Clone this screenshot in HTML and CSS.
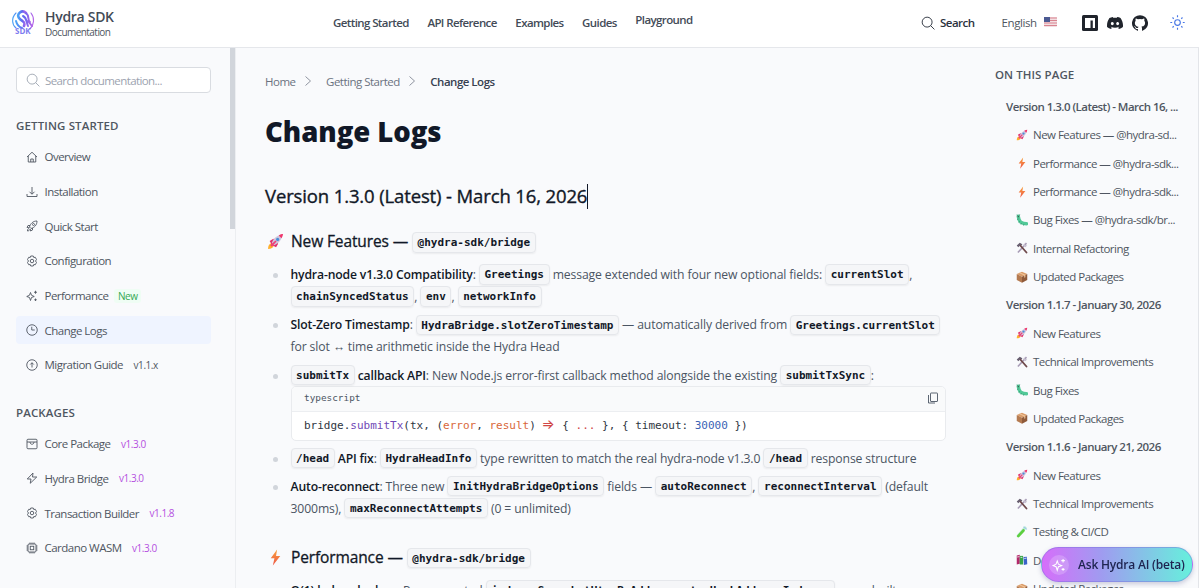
FILE: index.html
```
<!DOCTYPE html>
<html lang="en">
<head>
    <meta charset="UTF-8">
    <title>Change Logs - Hydra SDK</title>
    <link rel="stylesheet" href="styles.css">
</head>
<body>
    <!-- icon sprite -->
    <svg class="sprite">
        <linearGradient id="logoGrad" x1="0" y1="0" x2="1" y2="0"><stop offset="0" stop-color="#4aa3f5"/><stop offset=".5" stop-color="#6366f1"/><stop offset="1" stop-color="#b565e8"/></linearGradient>
        <symbol id="i-search" viewBox="0 0 24 24"><circle cx="10.5" cy="10.5" r="8.5"/><path d="M16.5 16.5 23 23"/></symbol>
        <symbol id="i-chev" viewBox="0 0 24 24"><path d="M7 3l10 9-10 9"/></symbol>
        <symbol id="i-home" viewBox="0 0 24 24"><path d="M2 12 12 2.500l10 9.500M4.500 10v12h15V10M9.500 22v-6h5v6"/></symbol>
        <symbol id="i-down" viewBox="0 0 24 24"><path d="M12 2v14M7 11.500l5 5 5-5M2 16v5h20v-5"/></symbol>
        <symbol id="i-rocket" viewBox="0 0 24 24"><path d="M7 14C9 7 14 2 22 2c0 8-5 13-12 15zM8 11H4l-2 4 5 .5M13 16v4l-4 2-.5-4M3 22c0-3 1-5 3-5M3 22c2 0 4-1 4-3"/><circle cx="15" cy="9" r="2"/></symbol>
        <symbol id="i-gear" viewBox="0 0 24 24"><path d="M9.500 2h5l1 3 3-.5 2.500 4.500-2 3 2 3-2.500 4.500-3-.5-1 3h-5l-1-3-3 .5L3 15l2-3-2-3 2.500-4.500 3 .5z"/><circle cx="12" cy="12" r="3.500"/></symbol>
        <symbol id="i-spark" viewBox="0 0 24 24"><path d="M9 5l2 5.500L16.500 13 11 15l-2 6-2-6-5.500-2L7 10.500zM19 1.500v6M16 4.500h6M19 17v5M16.500 19.500h5"/></symbol>
        <symbol id="i-clock" viewBox="0 0 24 24"><circle cx="12" cy="12" r="10.500"/><path d="M11.500 5.500V12h6"/></symbol>
        <symbol id="i-up" viewBox="0 0 24 24"><circle cx="12" cy="12" r="10.500"/><path d="M12 17V7.500M8.500 11 12 7.500l3.500 3.500"/></symbol>
        <symbol id="i-box" viewBox="0 0 24 24"><rect x="2" y="2.500" width="20" height="19" rx="2"/><path d="M2 8h20M8 8c0 6 8 6 8 0"/></symbol>
        <symbol id="i-bolt" viewBox="0 0 24 24"><path d="M14 2 2.500 14H10l-1.500 8.500L21.500 10H13z"/></symbol>
        <symbol id="i-chip" viewBox="0 0 24 24"><rect x="4" y="4" width="16" height="16" rx="2"/><rect x="8.500" y="8.500" width="7" height="7"/><path d="M8 1v3M12 1v3M16 1v3M8 20v3M12 20v3M16 20v3M1 8h3M1 12h3M1 16h3M20 8h3M20 12h3M20 16h3"/></symbol>
        <symbol id="i-copy" viewBox="0 0 24 24"><rect x="7" y="2" width="14" height="17" rx="1"/><path d="M3 6v16h13"/></symbol>
        <symbol id="i-sun" viewBox="0 0 24 24"><circle cx="12" cy="12" r="4.500"/><path d="M12 .5v3M12 20.500v3M.5 12h3M20.500 12h3M4 4l2 2M18 18l2 2M4 20l2-2M18 6l2-2"/></symbol>
        <symbol id="e-rocket" viewBox="0 0 32 32"><path d="M2 30c0-6 2-10 7-11l4 4c-1 5-5 7-11 7z" fill="#ffb02e"/><path d="M5 15l7-4 4 3-7 8zM17 27l4-7-3-4-8 7z" fill="#e0316e"/><path d="M9 19C12 10 19 4 29 3c-1 10-7 17-16 20z" fill="#cfc6dc"/><path d="M22 4.500C25 3 28 2 30 2c0 2-1 5-2.500 8z" fill="#f0356b"/><circle cx="20" cy="12" r="3" fill="#4a90d9"/><path d="M6 23l10-9 2 2-9 10z" fill="#ef3f78"/></symbol>
        <linearGradient id="boltGrad" x1="0" y1="0" x2="0" y2="1"><stop offset="0" stop-color="#f9a33b"/><stop offset="1" stop-color="#ed5548"/></linearGradient>
        <symbol id="e-bolt" viewBox="0 0 32 32"><path d="M19 1 7 17.500h7L11 31l14-18h-8z" fill="url(#boltGrad)"/></symbol>
        <symbol id="e-bug" viewBox="0 0 32 32"><path d="M6 6c1 7 2 12 7 16 5 3 9 4 15 4" fill="none" stroke="#52c998" stroke-width="9" stroke-linecap="round"/><path d="M3 15l4-2M7 22l4-3M13 28l2-4M20 31l1-4M2 2l4 3M10 1 8 5" stroke="#3c9474" stroke-width="2"/><circle cx="6" cy="7" r="1.500" fill="#333"/></symbol>
        <symbol id="e-tools" viewBox="0 0 32 32"><path d="M28 3 5 28" stroke="#a79bb5" stroke-width="4"/><path d="M2 9 10 2l7 4-3 4-3-1-5 5z" fill="#675e70"/><path d="M12 10l16 18" stroke="#6f4a4c" stroke-width="5" stroke-linecap="round"/><path d="M22 3l3 5 5 1-5 5-6-5z" fill="#c7bfd0"/></symbol>
        <symbol id="e-box" viewBox="0 0 32 32"><path d="M16 2 30 8 16 15 2 8z" fill="#d99b68"/><path d="M2 8v16l14 7V15z" fill="#b47a50"/><path d="M30 8v16l-14 7V15z" fill="#8f5a3a"/><path d="M8 5l14 7v6l3-1.500V10L11 4z" fill="#f1c69a"/></symbol>
        <symbol id="e-tube" viewBox="0 0 32 32"><path d="M24 5 6 26" stroke="#bfe8d8" stroke-width="8" stroke-linecap="round"/><path d="M20 12 6 27" stroke="#5dcf3e" stroke-width="7" stroke-linecap="round"/><path d="M20 2l9 7" stroke="#9bcfe0" stroke-width="3"/></symbol>
        <symbol id="e-books" viewBox="0 0 32 32"><path d="M2 4l8-2v24l-8 2z" fill="#b3286b"/><path d="M10 5h9v23h-9z" fill="#38a34a"/><path d="M20 8l9-1 1 20-9 2z" fill="#3a62c8"/><path d="M12 9h5M3 8l6-1M22 12l6-1" stroke="#fff" stroke-width="2"/></symbol>
    </svg>

    <header class="header">
        <div class="brand">
            <svg class="logo" viewBox="0 0 24 26">
                <g fill="none" stroke="url(#logoGrad)" stroke-linecap="round">
                    <path d="M5 4C0 9 1 16 5 19M20 4c4 5 3 12-1 16" stroke-width="1.100"/>
                    <path d="M15 4c-4-4-10 1-7 5s7 3 5 8" stroke-width="2.600"/>
                    <path d="M15 4c4 3 1 7 4 9M12 7c4 2 3 5 5 10M5 12c1 4 3 6 6 7M17 12l4 5" stroke-width="2"/>
                </g>
                <text x="4" y="24.500" class="logo-text">SDK</text>
            </svg>
            <div>
                <div class="brand-name">Hydra SDK</div>
                <div class="brand-sub">Documentation</div>
            </div>
        </div>
        <nav class="nav">
            <a>Getting Started</a>
            <a>API Reference</a>
            <a>Examples</a>
            <a>Guides</a>
            <a class="raised">Playground</a>
        </nav>
        <div class="tools">
            <div class="tool-search"><svg class="icon"><use href="#i-search"/></svg>Search</div>
            <div class="lang">English
                <svg class="flag" viewBox="0 0 13 10"><rect width="13" height="10" rx="1" fill="#f2dfe2"/><path d="M0 1h13M0 3.500h13M0 6h13M0 8.500h13" stroke="#d98490" stroke-width="1.200"/><rect width="6" height="5" fill="#4c5a92"/></svg>
            </div>
            <div class="social">
                <svg viewBox="0 0 16 16"><rect width="16" height="16" rx="1.500" fill="#20242c"/><path d="M3 3h10v10h-2.200V5.500H8.500V13H3z" fill="#fff"/></svg>
                <svg viewBox="0 0 24 24" fill="#20242c"><path d="M20.300 4.400A19.800 19.800 0 0 0 15.400 3l-.6 1.300a18 18 0 0 0-5.500 0L8.600 3a19.700 19.700 0 0 0-4.900 1.500C.5 9-.3 13.600.1 18.100a20 20 0 0 0 6 3l1.300-2-1.900-1 .4-.3a14 14 0 0 0 12.200 0l.4.3-1.900.9 1.300 2a20 20 0 0 0 6-3c.5-5.200-.8-9.700-3.600-13.600zM8 15.300c-1.200 0-2.200-1-2.200-2.400S6.800 10.500 8 10.500s2.200 1.100 2.200 2.400-1 2.400-2.200 2.400zm8 0c-1.200 0-2.200-1-2.200-2.400s1-2.400 2.200-2.400 2.200 1.100 2.200 2.400-1 2.400-2.200 2.400z"/></svg>
                <svg viewBox="0 0 24 24" fill="#20242c"><path d="M12 .3a12 12 0 0 0-3.800 23.400c.6.100.8-.3.800-.6v-2c-3.300.7-4-1.600-4-1.600-.6-1.400-1.400-1.800-1.400-1.800-1-.7.1-.7.1-.7 1.200 0 1.900 1.200 1.900 1.200 1 1.800 2.800 1.300 3.500 1 0-.8.400-1.300.7-1.600-2.700-.3-5.500-1.300-5.500-6 0-1.200.5-2.300 1.300-3.100-.2-.4-.6-1.600 0-3.200 0 0 1-.3 3.400 1.200a11.500 11.500 0 0 1 6 0c2.300-1.500 3.300-1.200 3.300-1.200.6 1.600.2 2.800 0 3.200.9.800 1.300 1.900 1.300 3.200 0 4.600-2.800 5.600-5.500 5.900.5.400.9 1 .9 2.200v3.300c0 .3.100.7.800.6A12 12 0 0 0 12 .3"/></svg>
            </div>
            <svg class="icon sun"><use href="#i-sun"/></svg>
        </div>
    </header>

    <div class="layout">
        <aside class="sidebar">
            <div class="side-search"><svg class="icon"><use href="#i-search"/></svg>Search documentation...</div>
            <h4 class="first">GETTING STARTED</h4>
            <ul>
                <li><svg class="icon"><use href="#i-home"/></svg>Overview</li>
                <li><svg class="icon"><use href="#i-down"/></svg>Installation</li>
                <li><svg class="icon"><use href="#i-rocket"/></svg>Quick Start</li>
                <li><svg class="icon"><use href="#i-gear"/></svg>Configuration</li>
                <li><svg class="icon"><use href="#i-spark"/></svg>Performance<span class="tag new">New</span></li>
                <li class="active"><svg class="icon"><use href="#i-clock"/></svg>Change Logs</li>
                <li><svg class="icon"><use href="#i-up"/></svg>Migration Guide<span class="tag">v1.1.x</span></li>
            </ul>
            <h4>PACKAGES</h4>
            <ul>
                <li><svg class="icon"><use href="#i-box"/></svg>Core Package<span class="tag ver">v1.3.0</span></li>
                <li><svg class="icon"><use href="#i-bolt"/></svg>Hydra Bridge<span class="tag ver">v1.3.0</span></li>
                <li><svg class="icon"><use href="#i-gear"/></svg>Transaction Builder<span class="tag ver">v1.1.8</span></li>
                <li><svg class="icon"><use href="#i-chip"/></svg>Cardano WASM<span class="tag ver">v1.3.0</span></li>
            </ul>
            <div class="scrollbar"></div>
        </aside>

        <main class="content">
            <div class="crumbs">
                <span>Home</span><svg class="icon"><use href="#i-chev"/></svg>
                <span>Getting Started</span><svg class="icon"><use href="#i-chev"/></svg>
                <span class="current">Change Logs</span>
            </div>
            <h1>Change Logs</h1>
            <h2>Version 1.3.0 (Latest) - March 16, 2026<i class="caret"></i></h2>

            <h3><svg class="emoji"><use href="#e-rocket"/></svg>New Features — <code>@hydra-sdk/bridge</code></h3>
            <ul class="log">
                <li><b>hydra-node v1.3.0 Compatibility</b>: <code>Greetings</code> message extended with four new optional fields: <code>currentSlot</code>,<br><code>chainSyncedStatus</code>, <code>env</code>, <code>networkInfo</code></li>
                <li><b>Slot-Zero Timestamp</b>: <code>HydraBridge.slotZeroTimestamp</code> — automatically derived from <code>Greetings.currentSlot</code><br>for slot ↔ time arithmetic inside the Hydra Head</li>
                <li><b><code>submitTx</code> callback API</b>: New Node.js error-first callback method alongside the existing <code>submitTxSync</code>:
                    <div class="codeblock">
                        <div class="code-head">typescript<svg class="icon"><use href="#i-copy"/></svg></div>
                        <pre>bridge.<span class="fn">submitTx</span>(tx, (<span class="arg">error</span>, <span class="arg">result</span>) <span class="arrow">=&gt;</span> { <span class="kw">...</span> }, { timeout: <span class="num">30000</span> })</pre>
                    </div>
                </li>
                <li><b><code>/head</code> API fix</b>: <code>HydraHeadInfo</code> type rewritten to match the real hydra-node v1.3.0 <code>/head</code> response structure</li>
                <li><b>Auto-reconnect</b>: Three new <code>InitHydraBridgeOptions</code> fields — <code>autoReconnect</code>, <code>reconnectInterval</code> (default<br>3000ms), <code>maxReconnectAttempts</code> (0 = unlimited)</li>
            </ul>

            <h3 class="perf"><svg class="emoji"><use href="#e-bolt"/></svg>Performance — <code>@hydra-sdk/bridge</code></h3>
            <ul class="log">
                <li><b>O(1) helper lookup</b>: Pre-computed <code>indexerSnapshotUtxoByAddress.utxoHashAddressIndexes</code> — prebuilt</li>
            </ul>
        </main>

        <aside class="toc">
            <h4>ON THIS PAGE</h4>
            <ul>
                <li class="top">Version 1.3.0 (Latest) - March 16, ...</li>
                <li><svg class="emoji"><use href="#e-rocket"/></svg>New Features — @hydra-sd...</li>
                <li><svg class="emoji"><use href="#e-bolt"/></svg>Performance — @hydra-sdk...</li>
                <li><svg class="emoji"><use href="#e-bolt"/></svg>Performance — @hydra-sdk...</li>
                <li><svg class="emoji"><use href="#e-bug"/></svg>Bug Fixes — @hydra-sdk/br...</li>
                <li><svg class="emoji"><use href="#e-tools"/></svg>Internal Refactoring</li>
                <li><svg class="emoji"><use href="#e-box"/></svg>Updated Packages</li>
                <li class="top">Version 1.1.7 - January 30, 2026</li>
                <li><svg class="emoji"><use href="#e-rocket"/></svg>New Features</li>
                <li><svg class="emoji"><use href="#e-tools"/></svg>Technical Improvements</li>
                <li><svg class="emoji"><use href="#e-bug"/></svg>Bug Fixes</li>
                <li><svg class="emoji"><use href="#e-box"/></svg>Updated Packages</li>
                <li class="top">Version 1.1.6 - January 21, 2026</li>
                <li><svg class="emoji"><use href="#e-rocket"/></svg>New Features</li>
                <li><svg class="emoji"><use href="#e-tools"/></svg>Technical Improvements</li>
                <li><svg class="emoji"><use href="#e-tube"/></svg>Testing &amp; CI/CD</li>
                <li><svg class="emoji"><use href="#e-books"/></svg>Documentation</li>
                <li><svg class="emoji"><use href="#e-box"/></svg>Updated Packages</li>
            </ul>
        </aside>
    </div>

    <button class="ask"><span class="ask-icon"><svg class="icon"><use href="#i-spark"/></svg></span>Ask Hydra AI (beta)</button>
</body>
</html>
```

FILE: styles.css
```
* {
    box-sizing: border-box;
}
body {
    margin: 0;
    height: 588px;
    overflow: hidden;
    font-family: "Open Sans", "Noto Sans", sans-serif;
    font-size: 11.5px;
    letter-spacing: -0.52px;
    color: #4f5661;
    background: #f9fafc;
}
ul {
    list-style: none;
    margin: 0;
    padding: 0;
}
h1, h2, h3, h4 {
    margin: 0;
}
.sprite {
    position: absolute;
    width: 0;
    height: 0;
}
.icon {
    width: 12px;
    height: 12px;
    flex: none;
    fill: none;
    stroke: currentColor;
    stroke-width: 1.8;
}
.emoji {
    width: 12px;
    height: 12px;
    flex: none;
}

/* header */
.header {
    display: flex;
    height: 48px;
    background: #fff;
    border-bottom: 1px solid #e5e7eb;
}
.brand {
    display: flex;
    width: 333px;
    padding: 8px 0 0 11px;
    gap: 10px;
}
.logo {
    width: 24px;
    height: 26px;
    margin-top: 1px;
}
.logo-text {
    font-size: 8px;
    font-weight: 700;
    letter-spacing: 0;
    fill: #7d7cf0;
}
.brand-name {
    font-size: 14px;
    line-height: 18px;
    font-weight: 600;
    letter-spacing: -0.3px;
    color: #434b57;
}
.brand-sub {
    font-size: 10px;
    line-height: 13px;
    letter-spacing: -0.55px;
}
.nav {
    display: flex;
    gap: 18.6px;
    width: 588px;
    line-height: 46px;
    font-weight: 600;
    letter-spacing: -0.6px;
    color: #434b57;
}
.raised {
    line-height: 39px;
}
.tools {
    display: flex;
    align-items: center;
    height: 45px;
}
.tool-search {
    display: flex;
    align-items: center;
    gap: 5px;
    width: 80.5px;
    font-weight: 600;
    letter-spacing: -0.5px;
    color: #2b323d;
}
.tool-search .icon {
    width: 14px;
    height: 14px;
    stroke-width: 1.6;
}
.lang {
    display: flex;
    align-items: center;
    gap: 7px;
    width: 80px;
    letter-spacing: -0.4px;
}
.flag {
    width: 13px;
    height: 10px;
    margin-top: -1px;
}
.social {
    display: flex;
    gap: 9px;
    width: 88.5px;
}
.social svg {
    width: 16px;
    height: 16px;
}
.sun {
    width: 15px;
    height: 15px;
    color: #4776e6;
}

.layout {
    display: flex;
    height: 540px;
}

/* left menu */
.sidebar {
    position: relative;
    width: 236px;
    padding: 19px 24px 0 16px;
    border-right: 1px solid #eceef1;
}
.side-search {
    display: flex;
    align-items: center;
    gap: 5px;
    height: 26px;
    padding-left: 9px;
    background: #fff;
    border: 1px solid #d9dce1;
    border-radius: 4px;
    color: #9ca3af;
    letter-spacing: -0.6px;
}
.side-search .icon {
    width: 14px;
    height: 14px;
    stroke-width: 1.5;
}
.sidebar h4 {
    margin: 26px 0 9px;
    font-size: 11.5px;
    line-height: 16px;
    font-weight: 600;
    letter-spacing: 0.13px;
}
.sidebar h4.first {
    margin-top: 25px;
}
.sidebar li {
    display: flex;
    align-items: center;
    gap: 6.5px;
    height: 27.7px;
    margin-bottom: 7px;
    padding-left: 10px;
    border-radius: 4px;
}
.sidebar .active {
    background: #eff4ff;
}
.tag {
    margin-left: 4px;
    font-size: 10px;
    letter-spacing: -0.45px;
}
.tag.new {
    margin-left: -1px;
    padding: 0 4px;
    border-radius: 3px;
    background: #effdf4;
    color: #34a853;
}
.tag.ver {
    color: #b44fe0;
}
.scrollbar {
    position: absolute;
    top: 0;
    right: 0;
    width: 5px;
    height: 181px;
    background: #d1d5db;
}

/* article */
.content {
    width: 759px;
    padding: 24px 0 0 29px;
    color: #4b5563;
}
.crumbs {
    display: flex;
    align-items: center;
    height: 20px;
    margin-top: -1px;
    letter-spacing: -0.5px;
    color: #6b7280;
}
.crumbs .icon {
    margin: 0 12.5px 0 6px;
    stroke-width: 1.5;
}
.crumbs .current {
    font-weight: 600;
    color: #374151;
}
h1 {
    margin-top: 21px;
    font-size: 27.5px;
    line-height: 40px;
    font-weight: 800;
    letter-spacing: -0.05px;
    color: #111827;
}
h2 {
    display: flex;
    align-items: center;
    margin-top: 31px;
    margin-bottom: 21px;
    font-size: 18.5px;
    line-height: 26px;
    font-weight: 400;
    letter-spacing: -0.13px;
    color: #111827;
    -webkit-text-stroke: 0.35px #111827;
}
.caret {
    width: 1px;
    height: 25px;
    background: #111827;
}
h3 {
    height: 22px;
    margin: 20px 0 12px;
    font-size: 15.5px;
    line-height: 22px;
    font-weight: 400;
    letter-spacing: -0.12px;
    color: #111827;
    -webkit-text-stroke: 0.3px #111827;
}
h3 .emoji {
    width: 17px;
    height: 17px;
    margin: 0 7px 0 2px;
    vertical-align: -3px;
}
.perf {
    margin-top: 26px;
}
.log li {
    position: relative;
    margin-bottom: 6.3px;
    padding-left: 25.5px;
    font-size: 12.2px;
    line-height: 22px;
    letter-spacing: -0.12px;
    white-space: nowrap;
}
.log li::before {
    content: "";
    position: absolute;
    left: 8px;
    top: 9px;
    width: 5px;
    height: 5px;
    border-radius: 50%;
    background: #d1d5db;
}
.log b {
    font-weight: 600;
    letter-spacing: -0.16px;
    color: #111827;
}
code {
    position: relative;
    top: -1px;
    padding: 2.6px 4.6px;
    border: 1px solid #e5e7eb;
    border-radius: 4px;
    background: #f5f6f8;
    box-shadow: 0 1px 2px rgba(0, 0, 0, 0.06);
    font-family: "DejaVu Sans Mono", monospace;
    font-size: 11px;
    line-height: 18px;
    font-weight: 700;
    letter-spacing: 0;
    color: #111827;
    -webkit-text-stroke: 0;
}
.codeblock {
    width: 655px;
    height: 55px;
    margin: -1px 0 7px;
    border: 1px solid #e9ebee;
    border-radius: 5px;
    background: #fff;
    overflow: hidden;
    font-family: "DejaVu Sans Mono", monospace;
    letter-spacing: 0;
}
.code-head {
    display: flex;
    justify-content: space-between;
    align-items: center;
    height: 25px;
    padding: 0 6px 1px 12.5px;
    border-bottom: 1px solid #eceef1;
    background: #f9fafb;
    font-size: 9.4px;
}
pre {
    margin: 0;
    padding: 3px 12.5px;
    font: inherit;
    font-size: 11px;
    color: #2f363f;
}
.fn { color: #7048b6; }
.arg { color: #d9673a; }
.kw { color: #d04848; }
.num { color: #3a62b5; }
.arrow {
    display: inline-block;
    width: 13.2px;
    font-family: Inter, sans-serif;
    font-size: 14px;
    line-height: 14px;
    text-indent: -1px;
    color: #d04848;
}

/* right outline */
.toc {
    width: 204px;
    padding: 19px 0 0;
    border-right: 1px solid #e3e5e9;
    white-space: nowrap;
}
.toc h4 {
    margin-bottom: 9.3px;
    font-size: 11.5px;
    line-height: 16px;
    font-weight: 600;
    letter-spacing: 0.07px;
}
.toc li {
    display: flex;
    align-items: center;
    gap: 5px;
    height: 28.37px;
    padding-left: 21px;
}
.toc .top {
    padding-left: 11px;
    font-weight: 600;
    letter-spacing: -0.53px;
}

.ask {
    position: fixed;
    right: 6px;
    bottom: 6px;
    display: flex;
    align-items: center;
    gap: 9px;
    width: 152px;
    height: 35px;
    padding: 0 0 0 7px;
    border: 1px solid rgba(120, 110, 220, 0.45);
    border-radius: 18px;
    background: linear-gradient(90deg, #d66efa, #9f9cf0 40%, #66f0dc);
    box-shadow: 0 2px 5px rgba(60, 60, 120, 0.25);
    font: 600 12px "Open Sans", sans-serif;
    letter-spacing: -0.2px;
    white-space: nowrap;
    color: #1e2450;
}
.ask-icon {
    display: flex;
    align-items: center;
    justify-content: center;
    width: 20px;
    height: 20px;
    border-radius: 50%;
    background: rgba(255, 255, 255, 0.2);
    color: #fff;
}
.ask-icon .icon {
    width: 14px;
    height: 14px;
}
```
